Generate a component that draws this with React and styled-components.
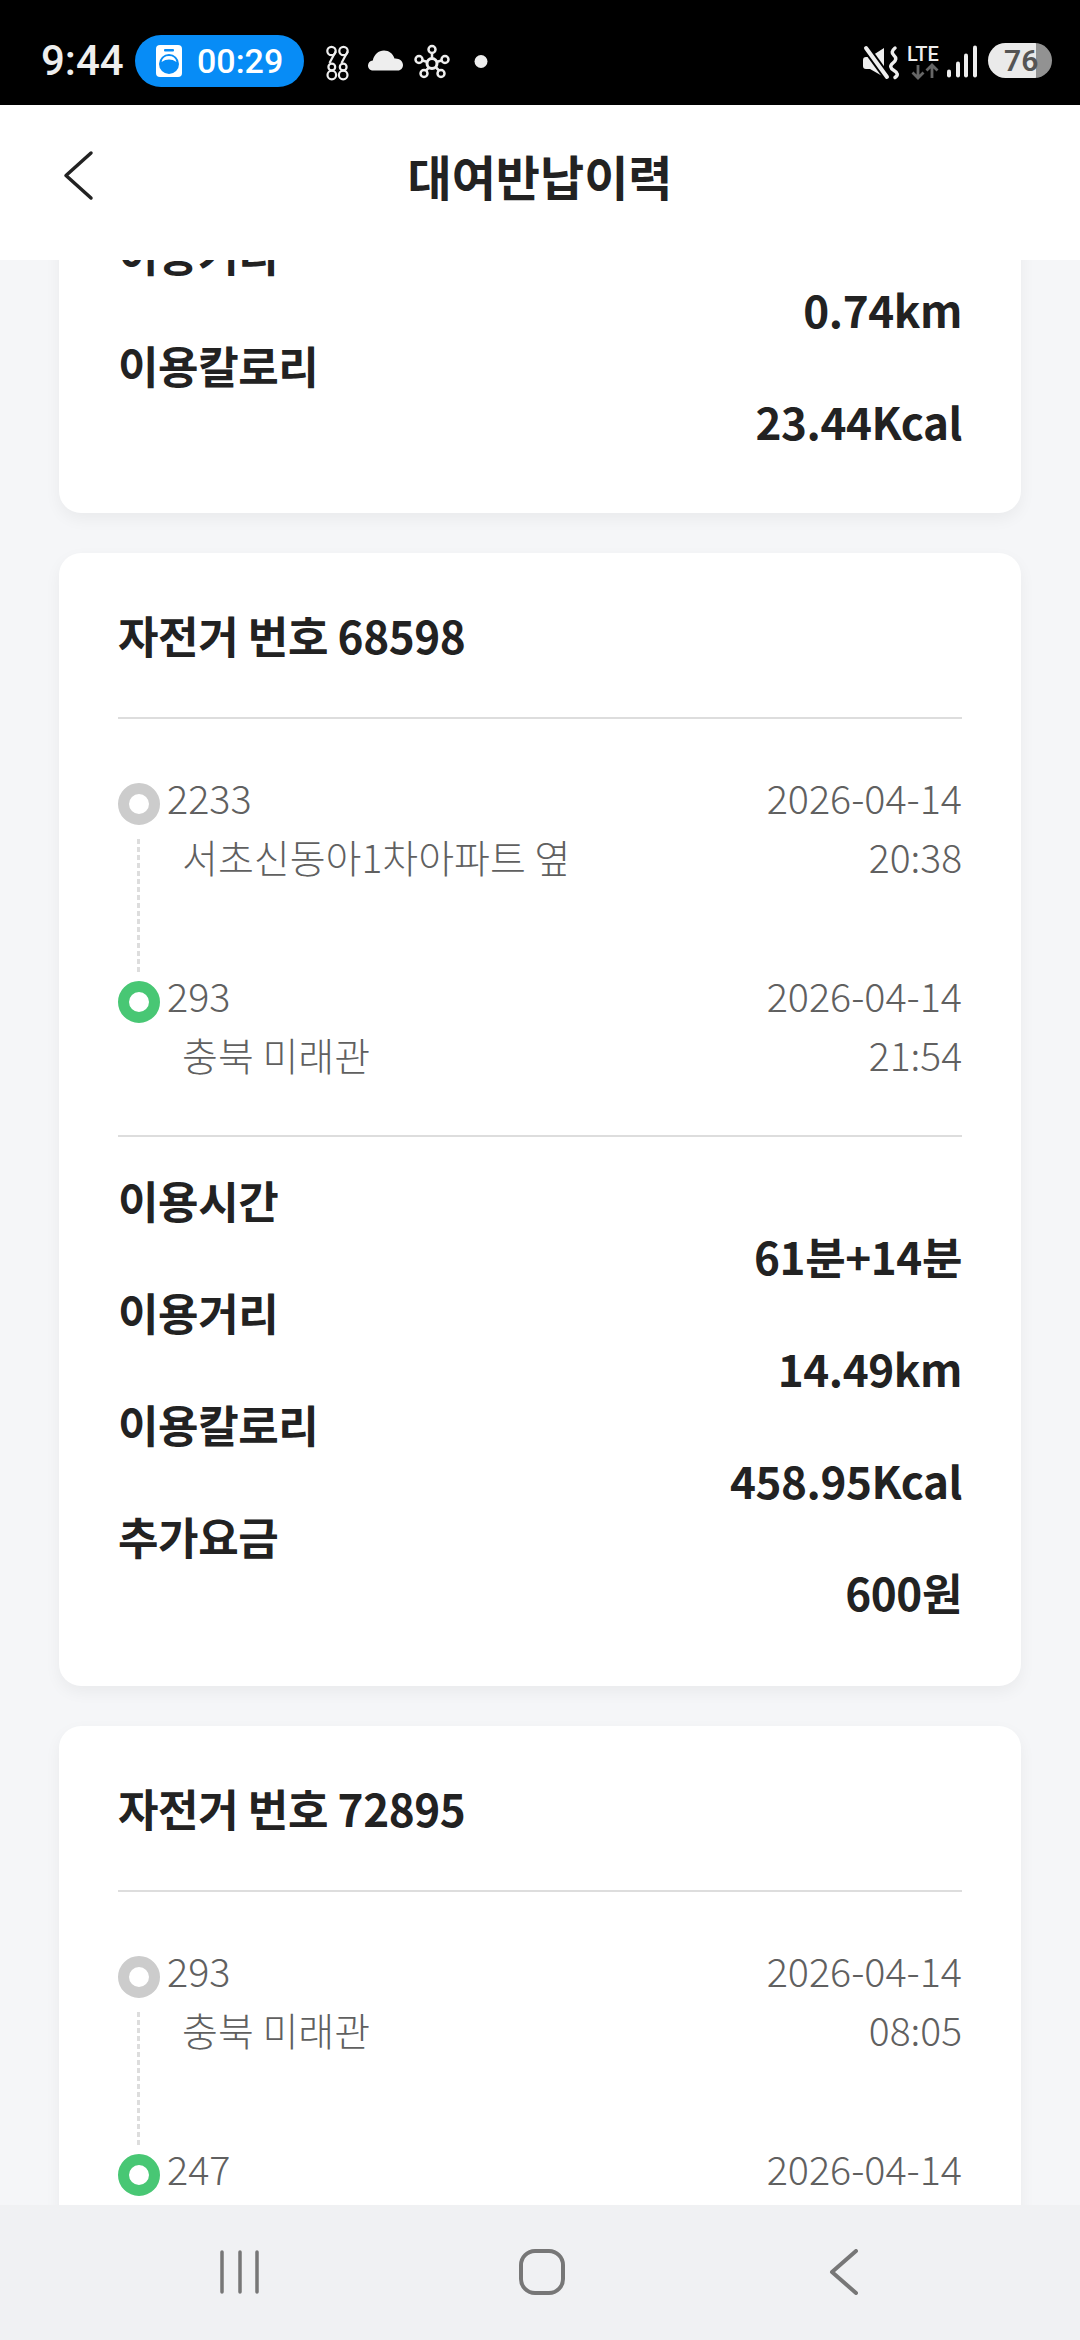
import styled, { createGlobalStyle } from 'styled-components';

const GlobalStyle = createGlobalStyle`
  html, body {
    margin: 0;
    padding: 0;
    background: #f5f6f8;
    font-family: 'Noto Sans CJK KR', 'Noto Sans', sans-serif;
  }
  * {
    box-sizing: border-box;
  }
`;

const Screen = styled.div`
  width: 1080px;
  height: 2340px;
  display: flex;
  flex-direction: column;
  overflow: hidden;
`;

const StatusBar = styled.div`
  flex: 0 0 105px;
  background: #000;
  display: flex;
  align-items: center;
  justify-content: space-between;
  padding: 16px 28px 0 41px;
  font-family: Roboto, 'Liberation Sans', sans-serif;
  color: #eee;
`;
const StatusGroup = styled.div`
  display: flex;
  align-items: center;
`;
const Clock = styled.span`
  font-size: 42px;
  font-weight: 500;
  width: 94px;
`;
const TimerPill = styled.div`
  width: 169px;
  height: 52px;
  border-radius: 26px;
  background: #078cf6;
  display: flex;
  align-items: center;
  gap: 15px;
  padding-left: 21px;
  margin-right: 22px;
  color: #fff;
  font-size: 34px;
  font-weight: 500;
`;
const Battery = styled.div`
  width: 64px;
  height: 35px;
  border-radius: 18px;
  margin-left: 9px;
  background: linear-gradient(to right, #eaeaea 48px, #929292 48px);
  color: #555;
  font-size: 30px;
  font-weight: 600;
  line-height: 36px;
  padding-left: 16px;
`;

const Header = styled.header`
  flex: 0 0 155px;
  background: #fff;
  position: relative;
  display: flex;
  align-items: center;
  justify-content: center;
  padding-bottom: 16px;
`;
const BackButton = styled.svg`
  position: absolute;
  left: 62px;
  top: 45px;
`;
const HeaderTitle = styled.h1`
  margin: 0;
  font-size: 48px;
  font-weight: 700;
  color: #222;
`;

const Scroller = styled.main`
  flex: 1;
  min-height: 0;
  overflow: hidden;
  padding: 0 59px;
  background: #f5f6f8;
`;
const CardList = styled.div`
  display: flex;
  flex-direction: column;
  gap: 40px;
  margin-top: -35px;
`;
const Card = styled.section`
  background: #fff;
  border-radius: 22px;
  padding: 0 59px;
  box-shadow: 0 6px 16px rgba(0, 0, 0, 0.05);
`;
const CardTitle = styled.h2`
  margin: 0;
  height: 166px;
  display: flex;
  align-items: center;
  border-bottom: 2px solid #ddd;
  font-size: 44px;
  font-weight: 700;
  color: #222;
  letter-spacing: -0.4px;
`;

const Route = styled.div`
  padding-top: 64px;
`;
const StopHead = styled.div`
  display: flex;
  align-items: center;
  height: 42px;
  font-size: 39.5px;
  font-weight: 300;
  color: #606060;
`;
const Dot = styled.span`
  width: 42px;
  height: 42px;
  flex: none;
  border-radius: 50%;
  border: 11px solid ${(p) => (p.$end ? '#48c774' : '#cccccc')};
  background: #fff;
  margin-right: 7px;
`;
const Code = styled.span`
  transform: translateY(-8px);
`;
const DateText = styled.span`
  margin-left: auto;
  transform: translateY(-8px);
`;
const StopBody = styled.div`
  display: flex;
  height: ${(p) => (p.$end ? '112px' : '156px')};
  font-size: 39px;
  font-weight: 300;
  line-height: 58px;
  color: #606060;
`;
const Connector = styled.span`
  flex: none;
  width: 3px;
  height: 134px;
  margin: 14px 42px 0 19px;
  background: ${(p) =>
    p.$hidden ? 'none' : 'repeating-linear-gradient(to bottom, #ddd 0 5px, transparent 5px 8px)'};
`;
const Address = styled.span`
  padding-top: 2px;
`;
const TimeText = styled.span`
  margin-left: auto;
  padding-top: 2px;
`;

const Stats = styled.div`
  padding: ${(p) => (p.$plain ? '0 0 64px' : '35px 0 66px')};
  border-top: ${(p) => (p.$plain ? 'none' : '2px solid #ddd')};
`;
const StatLabel = styled.div`
  height: 56px;
  line-height: 56px;
  font-size: 44px;
  font-weight: 700;
  color: #222;
  letter-spacing: -0.4px;
`;
const StatValue = styled.div`
  height: 56px;
  line-height: 56px;
  font-size: 44px;
  font-weight: 700;
  color: #222;
  text-align: right;
  letter-spacing: -0.4px;
`;

const NavBar = styled.nav`
  flex: 0 0 135px;
  background: #f0f1f3;
  display: grid;
  grid-template-columns: repeat(3, 302px);
  align-items: center;
  justify-items: center;
  padding: 0 0 2px 89px;
`;

const rides = [
  {
    id: 68598,
    from: { code: '2233', name: '서초신동아1차아파트 옆', date: '2026-04-14', time: '20:38' },
    to: { code: '293', name: '충북 미래관', date: '2026-04-14', time: '21:54' },
    stats: [
      ['이용시간', '61분+14분'],
      ['이용거리', '14.49km'],
      ['이용칼로리', '458.95Kcal'],
      ['추가요금', '600원']
    ]
  },
  {
    id: 72895,
    from: { code: '293', name: '충북 미래관', date: '2026-04-14', time: '08:05' },
    to: { code: '247', date: '2026-04-14' }
  }
];

function WasherIcon() {
  return (
    <svg width='26' height='32' viewBox='0 0 26 32'>
      <rect width='26' height='32' rx='4' fill='#fff' />
      <rect x='8' y='4' width='10' height='2.500' rx='1' fill='#078cf6' />
      <circle cx='13' cy='19' r='10' fill='#078cf6' />
      <path d='M5.500 17a7.700 7.700 0 0 1 15 0a14 14 0 0 0-15 0z' fill='#fff' />
    </svg>
  );
}

function NotifyIcons() {
  return (
    <svg width='165' height='40' viewBox='0 0 165 40' fill='none'>
      {/* 9988 */}
      <g stroke='#eee' strokeWidth='2.200'>
        <circle cx='5.500' cy='10' r='4.200' />
        <circle cx='17.500' cy='10' r='4.200' />
        <path d='M9.700 10.500L3.500 22M21.700 10.500L15.500 22' />
        <circle cx='5.800' cy='26' r='3.400' />
        <circle cx='17.200' cy='26' r='3.400' />
        <circle cx='5.800' cy='34' r='4.300' />
        <circle cx='17.200' cy='34' r='4.300' />
      </g>
      {/* cloud */}
      <path
        d='M47 29.500c-3 0-5-2.200-5-5 0-2.600 2-4.800 4.800-5C48 13.500 52.500 9.500 58 9.500c5 0 9 3.200 10.500 8h1c4 0 7.500 2.800 7.500 6.500 0 3-2.200 5.500-5 5.500z'
        fill='#eee'
      />
      {/* network */}
      <g stroke='#eee' strokeWidth='2.500'>
        <circle cx='106' cy='22.500' r='5' strokeWidth='3' />
        <circle cx='106' cy='8.500' r='3.500' />
        <circle cx='93' cy='18.500' r='3.500' />
        <circle cx='119' cy='18.500' r='3.500' />
        <circle cx='98' cy='32.500' r='3.500' />
        <circle cx='115' cy='32.500' r='3.500' />
        <path d='M106 12v6M96.500 19.500l5 1.500M115.500 19.500l-5 1.500M100 29.500l3-3M113 29.500l-3-3' />
      </g>
      <circle cx='155' cy='20.500' r='6.500' fill='#eee' />
    </svg>
  );
}

function SystemIcons() {
  return (
    <svg width='116' height='40' viewBox='0 0 116 40' fill='none'>
      {/* muted speaker */}
      <path d='M0 19q0-3 3-3h4L21 7v29L7 28H3q-3 0-3-3z' fill='#eee' />
      <path d='M3 7l21 29' stroke='#000' strokeWidth='8' />
      <path d='M3 7l21 29' stroke='#eee' strokeWidth='4' strokeLinecap='round' />
      <path
        d='M32 7q-5 4-1 7.500t-1 7.500t1 7.500t1 7'
        stroke='#eee'
        strokeWidth='3.500'
        strokeLinecap='round'
      />
      <text x='44' y='19.500' fontFamily='Roboto, sans-serif' fontSize='20' fontWeight='500' fill='#eee'>
        LTE
      </text>
      {/* data arrows */}
      <path
        d='M55 24v13M49.500 31.500l5.500 5.500 5.500-5.500M69 37V24M63.500 29.500l5.500-5.500 5.500 5.500'
        stroke='#666'
        strokeWidth='2.800'
      />
      {/* signal */}
      <g fill='#eee'>
        <rect x='84' y='28.500' width='4' height='8' rx='2' />
        <rect x='93' y='20.500' width='4' height='16' rx='2' />
        <rect x='101' y='12.500' width='4' height='24' rx='2' />
        <rect x='110' y='4.500' width='4' height='32' rx='2' />
      </g>
    </svg>
  );
}

function StatList({ rows, plain }) {
  return (
    <Stats $plain={plain}>
      {rows.map(([label, value]) => (
        <div key={label}>
          <StatLabel>{label}</StatLabel>
          <StatValue>{value}</StatValue>
        </div>
      ))}
    </Stats>
  );
}

function RideCard({ ride }) {
  const { id, from, to, stats } = ride;
  return (
    <Card>
      <CardTitle>자전거 번호 {id}</CardTitle>
      <Route>
        <StopHead>
          <Dot />
          <Code>{from.code}</Code>
          <DateText>{from.date}</DateText>
        </StopHead>
        <StopBody>
          <Connector />
          <Address>{from.name}</Address>
          <TimeText>{from.time}</TimeText>
        </StopBody>
        <StopHead>
          <Dot $end />
          <Code>{to.code}</Code>
          <DateText>{to.date}</DateText>
        </StopHead>
        <StopBody $end>
          <Connector $hidden />
          <Address>{to.name}</Address>
          <TimeText>{to.time}</TimeText>
        </StopBody>
      </Route>
      {stats && <StatList rows={stats} />}
    </Card>
  );
}

function App() {
  return (
    <Screen>
      <GlobalStyle />
      <StatusBar>
        <StatusGroup>
          <Clock>9:44</Clock>
          <TimerPill>
            <WasherIcon />
            00:29
          </TimerPill>
          <NotifyIcons />
        </StatusGroup>
        <StatusGroup>
          <SystemIcons />
          <Battery>76</Battery>
        </StatusGroup>
      </StatusBar>

      <Header>
        <BackButton width='34' height='52' viewBox='0 0 34 52' fill='none'>
          <path d='M29 3L4 25.500 29 48' stroke='#222' strokeWidth='3.500' strokeLinecap='round' strokeLinejoin='round' />
        </BackButton>
        <HeaderTitle>대여반납이력</HeaderTitle>
      </Header>

      <Scroller>
        <CardList>
          <Card>
            <StatList
              plain
              rows={[
                ['이용거리', '0.74km'],
                ['이용칼로리', '23.44Kcal']
              ]}
            />
          </Card>
          {rides.map((ride) => (
            <RideCard key={ride.id} ride={ride} />
          ))}
        </CardList>
      </Scroller>

      <NavBar>
        <svg width='40' height='44' viewBox='0 0 40 44' fill='none' stroke='#777' strokeWidth='3.500' strokeLinecap='round'>
          <path d='M2 2v40M20 2v40M37 2v40' />
        </svg>
        <svg width='46' height='46' viewBox='0 0 46 46' fill='none' stroke='#777' strokeWidth='4'>
          <rect x='2' y='2' width='42' height='42' rx='14' />
        </svg>
        <svg width='30' height='46' viewBox='0 0 30 46' fill='none' stroke='#777' strokeWidth='4' strokeLinecap='round' strokeLinejoin='round'>
          <path d='M27 2L3 23l24 21' />
        </svg>
      </NavBar>
    </Screen>
  );
}

export default App;
